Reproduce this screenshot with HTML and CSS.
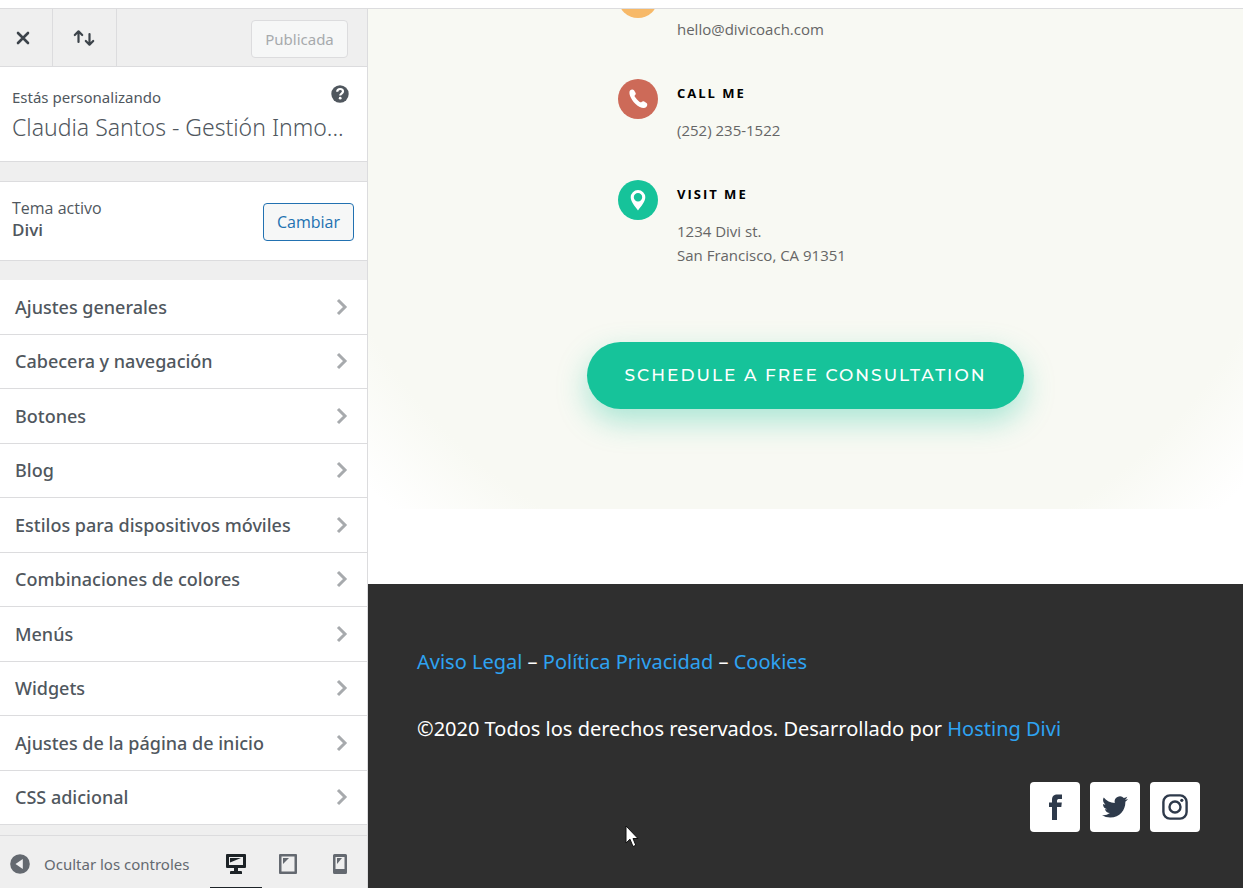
FILE: index.html
```html
<!DOCTYPE html>
<html lang="es">
<head>
  <meta charset="UTF-8">
  <meta name="viewport" content="width=device-width, initial-scale=1">
  <title>Personalizar</title>
  <link rel="stylesheet" href="styles.css">
</head>
<body>
  <div class="customizer">
    <aside class="sidebar">
      <header class="toolbar">
        <button class="tool close">
          <svg width="14" height="14" viewBox="0 0 14 14" fill="none" stroke="currentColor" stroke-width="2.6" stroke-linecap="round"><path d="M2 2l10 10M12 2L2 12"/></svg>
        </button>
        <button class="tool sort">
          <svg width="22" height="18" viewBox="0 0 22 18" fill="none" stroke="currentColor" stroke-width="2.2" stroke-linecap="round" stroke-linejoin="round"><path d="M5.500 13V2.500M1.800 6l3.700-3.700L9.200 6M16.500 5v10.500M12.800 12l3.700 3.700 3.700-3.700"/></svg>
        </button>
        <button class="btn publish" disabled>Publicada</button>
      </header>

      <section class="info">
        <div class="info-top">
          <span>Estás personalizando</span>
          <button class="help">
            <svg width="18" height="18" viewBox="0 0 18 18"><circle cx="9" cy="9" r="8.700" fill="#50575e"/><path d="M6.200 6.700C6.300 4.800 7.500 4 9.100 4c1.700 0 2.900.9 2.900 2.400 0 2.200-2.800 2.200-2.800 4.200" fill="none" stroke="#fff" stroke-width="2.200"/><circle cx="9.200" cy="13.200" r="1.400" fill="#fff"/></svg>
          </button>
        </div>
        <h1 class="site-title">Claudia Santos - Gestión Inmo...</h1>
      </section>

      <section class="theme">
        <div>
          <span>Tema activo</span>
          <h2 class="theme-name">Divi</h2>
        </div>
        <button class="btn change">Cambiar</button>
      </section>

      <nav class="panels">
        <button class="panel">Ajustes generales <svg class="arrow" viewBox="0 0 12 18"><path d="M2 2l7 7-7 7"/></svg></button>
        <button class="panel">Cabecera y navegación <svg class="arrow" viewBox="0 0 12 18"><path d="M2 2l7 7-7 7"/></svg></button>
        <button class="panel">Botones <svg class="arrow" viewBox="0 0 12 18"><path d="M2 2l7 7-7 7"/></svg></button>
        <button class="panel">Blog <svg class="arrow" viewBox="0 0 12 18"><path d="M2 2l7 7-7 7"/></svg></button>
        <button class="panel">Estilos para dispositivos móviles <svg class="arrow" viewBox="0 0 12 18"><path d="M2 2l7 7-7 7"/></svg></button>
        <button class="panel">Combinaciones de colores <svg class="arrow" viewBox="0 0 12 18"><path d="M2 2l7 7-7 7"/></svg></button>
        <button class="panel">Menús <svg class="arrow" viewBox="0 0 12 18"><path d="M2 2l7 7-7 7"/></svg></button>
        <button class="panel">Widgets <svg class="arrow" viewBox="0 0 12 18"><path d="M2 2l7 7-7 7"/></svg></button>
        <button class="panel">Ajustes de la página de inicio <svg class="arrow" viewBox="0 0 12 18"><path d="M2 2l7 7-7 7"/></svg></button>
        <button class="panel">CSS adicional <svg class="arrow" viewBox="0 0 12 18"><path d="M2 2l7 7-7 7"/></svg></button>
      </nav>

      <footer class="actions">
        <button class="collapse">
          <svg width="20" height="20" viewBox="0 0 20 20"><circle cx="10" cy="10" r="9.800" fill="#646970"/><path d="M12.800 5v10L5.500 10z" fill="#f0f0f1"/></svg>
          Ocultar los controles
        </button>
        <div class="devices">
          <button class="device active">
            <svg width="20" height="20" viewBox="0 0 20 20" fill="currentColor"><path fill-rule="evenodd" d="M1 0h18a1 1 0 0 1 1 1v12a1 1 0 0 1-1 1h-7v3h3q1 0 1 1v2H4v-2q0-1 1-1h3v-3H1a1 1 0 0 1-1-1V1a1 1 0 0 1 1-1zM3 3v8h14V3z"/><path d="M4 4h11L4 8.500z"/></svg>
          </button>
          <button class="device">
            <svg width="18" height="20" viewBox="0 0 18 20" fill="currentColor"><path fill-rule="evenodd" d="M1 0h16a1 1 0 0 1 1 1v18a1 1 0 0 1-1 1H1a1 1 0 0 1-1-1V1a1 1 0 0 1 1-1zM2.500 2.500v15h13v-15z"/><path d="M4 4h6L4 10z"/></svg>
          </button>
          <button class="device">
            <svg width="14" height="20" viewBox="0 0 14 20" fill="currentColor"><path fill-rule="evenodd" d="M1.500 0h11A1.500 1.500 0 0 1 14 1.500v17a1.500 1.500 0 0 1-1.500 1.500h-11A1.500 1.500 0 0 1 0 18.500v-17A1.500 1.500 0 0 1 1.500 0zM2.500 3v12h9V3z"/><path d="M4 4h5L4 10z"/></svg>
          </button>
        </div>
      </footer>
    </aside>

    <main class="preview">
      <section class="contact">
        <ul class="contact-list">
          <li class="contact-item email">
            <span class="badge orange"></span>
            <p>hello@divicoach.com</p>
          </li>
          <li class="contact-item">
            <span class="badge red">
              <svg width="20" height="20" viewBox="0 0 20 20" fill="#fff"><path d="M2 1.500C3.200.3 5 .1 6 1.300l1.500 2.500c.6 1 .2 1.800-.8 2.800-.5.500.1 1.500 2.300 3.800s3.600 3.200 4.300 2.800c.9-.8 1.900-1.300 2.900-.7l2.300 1.500c1.200 1 .9 2.700-.2 4-1.800 1.900-6.300 1.300-11-3.300C2.500 10 .3 4 2 1.500z"/></svg>
            </span>
            <div>
              <h4>Call Me</h4>
              <p>(252) 235-1522</p>
            </div>
          </li>
          <li class="contact-item">
            <span class="badge green">
              <svg width="16" height="22" viewBox="0 0 16 22" fill="#fff"><path fill-rule="evenodd" d="M8 1a7.300 7.300 0 0 1 7.300 7.300C15.300 13 10.500 18 8 21.500 5.500 18 .7 13 .7 8.300A7.300 7.300 0 0 1 8 1zm0 3a4.200 4.200 0 1 0 0 8.400A4.200 4.200 0 0 0 8 4z"/></svg>
            </span>
            <div>
              <h4>Visit Me</h4>
              <p>1234 Divi st.<br>San Francisco, CA 91351</p>
            </div>
          </li>
        </ul>
        <a class="cta" href="#">Schedule a free consultation</a>
      </section>

      <footer class="site-footer">
        <p><a href="#">Aviso Legal</a> – <a href="#">Política Privacidad</a> – <a href="#">Cookies</a></p>
        <p>©2020 Todos los derechos reservados. Desarrollado por <a href="#">Hosting Divi</a></p>
        <div class="social">
          <a href="#"><svg width="26" height="26" viewBox="0 0 26 26" fill="#2e3a4b"><path d="M10 26V13H7V8.500h3V6c0-3.800 2-5.500 5.500-5.500H20V5h-2.500C15.700 5 15 5.400 15 7v1.500h4.800L19.300 13H15v13z"/></svg></a>
          <a href="#"><svg width="26" height="26" viewBox="0 0 24 24" fill="#2e3a4b"><path d="M23.950 4.570a10 10 0 0 1-2.820.77 4.960 4.960 0 0 0 2.160-2.720c-.95.550-2 .95-3.130 1.180a4.920 4.920 0 0 0-8.380 4.480C7.690 8.090 4.070 6.130 1.640 3.160a4.820 4.820 0 0 0-.67 2.480c0 1.710.87 3.210 2.190 4.100a4.900 4.900 0 0 1-2.230-.62v.06a4.920 4.920 0 0 0 3.950 4.830 5 5 0 0 1-2.210.08 4.940 4.940 0 0 0 4.600 3.420A9.870 9.870 0 0 1 0 19.540a13.990 13.990 0 0 0 7.560 2.210c9.050 0 14-7.500 14-13.980 0-.21 0-.42-.02-.63a9.940 9.940 0 0 0 2.460-2.550z"/></svg></a>
          <a href="#"><svg width="26" height="26" viewBox="0 0 26 26" fill="none" stroke="#2e3a4b" stroke-width="2.400"><rect x="1.400" y="1.400" width="23.200" height="23.200" rx="6.500"/><circle cx="13" cy="13" r="5.500"/><circle cx="19.800" cy="6.300" r="1.600" fill="#2e3a4b" stroke="none"/></svg></a>
        </div>
      </footer>
    </main>
  </div>

  <svg class="cursor" width="14" height="23" viewBox="0 0 14 23"><path d="M1 1v17l4-3.800L8 21.500l2.800-1.200L8 13.500h5z" fill="#fff" stroke="#111" stroke-width="1"/></svg>
</body>
</html>
```

FILE: styles.css
```css
* {
  box-sizing: border-box;
}

body {
  margin: 0;
  padding-top: 8px;
  height: 100vh;
  background: #fff;
  font-family: "Open Sans", sans-serif;
  overflow: hidden;
}

h1, h2, h4, p, ul {
  margin: 0;
  padding: 0;
}

button {
  padding: 0;
  border: none;
  background: none;
  font-family: inherit;
  color: inherit;
  cursor: pointer;
}

svg {
  display: block;
}

.customizer {
  display: flex;
  height: 100%;
  border-top: 1px solid #dcdcde;
}

/* sidebar */
.sidebar {
  display: flex;
  flex-direction: column;
  width: 368px;
  flex-shrink: 0;
  background: #efefef;
  border-right: 1px solid #dcdcde;
  color: #50575e;
  font-size: 16px;
}

.toolbar {
  display: flex;
  align-items: center;
  height: 58px;
  border-bottom: 1px solid #dcdcde;
}

.tool {
  display: flex;
  align-items: center;
  justify-content: center;
  height: 100%;
  border-right: 1px solid #dcdcde;
  color: #3c434a;
}

.close {
  width: 53px;
  padding-right: 6px;
}

.sort {
  width: 64px;
  padding-right: 2px;
}

.btn {
  height: 38px;
  border: 1px solid;
  border-radius: 4px;
  background: #f6f7f7;
}

.publish {
  width: 97px;
  margin: 2px 19px 0 auto;
  border-color: #dcdcde;
  color: #a7aaad;
  font-family: "Noto Sans", sans-serif;
  font-size: 15px;
}

.info {
  height: 95px;
  padding: 18px 18px 0 12px;
  background: #fff;
  border-bottom: 1px solid #dcdcde;
  font-family: "Noto Sans", sans-serif;
}

.info-top {
  display: flex;
  justify-content: space-between;
  line-height: 24px;
  font-size: 15px;
}

.help {
  height: 18px;
}

.site-title {
  font-size: 23px;
  font-weight: 300;
  line-height: 36px;
  white-space: nowrap;
}

.theme {
  display: flex;
  align-items: center;
  justify-content: space-between;
  height: 80px;
  margin: 19px 0;
  padding: 0 13px 4px 12px;
  background: #fff;
  border: solid #dcdcde;
  border-width: 1px 0;
  line-height: 22px;
}

.theme-name {
  font-size: 17px;
  font-weight: 600;
}

.change {
  width: 91px;
  margin-top: 6px;
  border-color: #2271b1;
  color: #2271b1;
  font-size: 16px;
}

.panels {
  display: grid;
  grid-auto-rows: 1fr;
  flex: 1;
}

.panel {
  display: flex;
  align-items: center;
  justify-content: space-between;
  padding: 0 19px 0 15px;
  background: #fff;
  border-bottom: 1px solid #dcdcde;
  font-family: "Noto Sans", sans-serif;
  font-size: 18px;
  font-weight: 500;
}

.arrow {
  width: 12px;
  height: 18px;
  fill: none;
  stroke: #a7aaad;
  stroke-width: 3;
}

.actions {
  display: flex;
  justify-content: space-between;
  height: 53px;
  margin-top: 10px;
  padding-right: 1px;
  border-top: 1px solid #dcdcde;
  color: #646970;
}

.collapse {
  display: flex;
  align-items: center;
  gap: 14px;
  padding: 4px 0 0 10px;
  font-family: "Noto Sans", sans-serif;
  font-size: 15px;
}

.devices {
  display: flex;
}

.device {
  display: flex;
  align-items: center;
  justify-content: center;
  width: 52px;
  padding-top: 5px;
  border-bottom: 1px solid transparent;
}

.active {
  border-color: #1d2327;
  color: #1d2327;
}

/* site preview, scrolled to the bottom */
.preview {
  display: flex;
  flex-direction: column;
  justify-content: flex-end;
  flex: 1;
  min-width: 0;
  overflow: hidden;
}

.contact {
  display: flex;
  flex-direction: column;
  align-items: center;
  padding-bottom: 100px;
  margin-bottom: 75px;
  background: radial-gradient(circle 600px at 50% calc(100% - 432px), #f8f9f3 84%, #fff 100%);
}

.contact-list {
  width: 100%;
  max-width: 375px;
  list-style: none;
}

.contact-item {
  display: flex;
  gap: 19px;
  margin-bottom: 38px;
  color: #666;
  font-size: 15px;
  line-height: 24px;
}

.contact-item:last-child {
  margin-bottom: 75px;
}

.contact-item h4 {
  margin: 4px 0 15px;
  color: #000;
  font-size: 13px;
  font-weight: 700;
  line-height: 20px;
  letter-spacing: 2px;
  text-transform: uppercase;
}

.email {
  height: 63px;
}

.email p {
  align-self: flex-end;
}

.badge {
  display: flex;
  align-items: center;
  justify-content: center;
  width: 40px;
  height: 40px;
  border-radius: 50%;
}

.orange {
  background: #f7b968;
}

.red {
  background: #cd6a58;
}

.green {
  background: #16c39a;
}

.cta {
  padding: 0 38px;
  border-radius: 34px;
  background: #16c39a;
  box-shadow: 0 12px 30px rgba(22, 195, 154, 0.35);
  color: #fff;
  font-family: Montserrat, Inter, sans-serif;
  font-size: 17px;
  font-weight: 500;
  line-height: 67px;
  letter-spacing: 2px;
  text-decoration: none;
  text-transform: uppercase;
}

.site-footer {
  padding: 61px 43px 56px 49px;
  background: #2f2f2f;
  color: #fff;
  font-family: "Noto Sans", sans-serif;
  font-size: 20px;
  line-height: 34px;
}

.site-footer p {
  margin-bottom: 33px;
}

.site-footer p a {
  color: #2ea3f2;
  text-decoration: none;
}

.social {
  display: flex;
  justify-content: flex-end;
  gap: 10px;
  padding-top: 3px;
}

.social a {
  display: flex;
  align-items: center;
  justify-content: center;
  width: 50px;
  height: 50px;
  border-radius: 4px;
  background: #fff;
}

.cursor {
  position: absolute;
  left: 625px;
  top: 825px;
}
```
